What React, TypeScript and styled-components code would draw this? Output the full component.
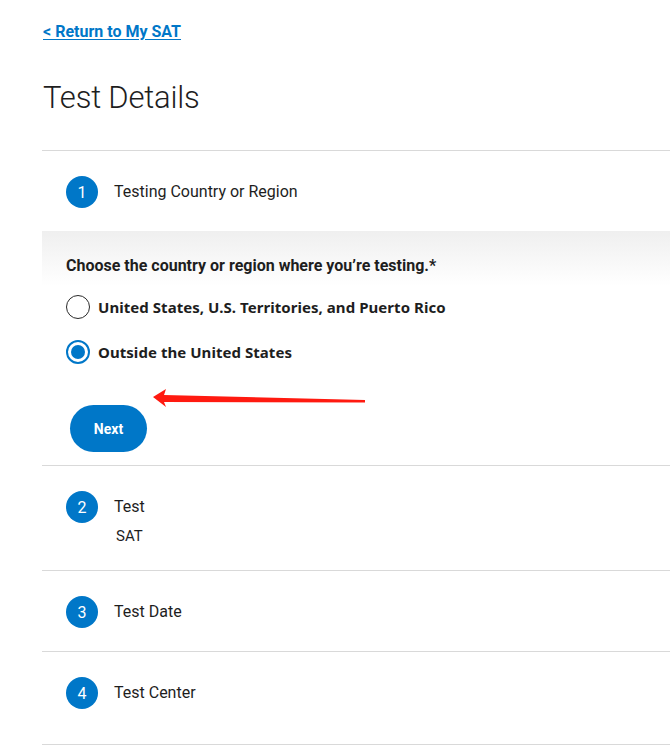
import React from "react";
import styled, { createGlobalStyle } from "styled-components";

const Global = createGlobalStyle`
  html, body { margin: 0; padding: 0; background: #fff; overflow: hidden; }
  body { font-family: Roboto, "Liberation Sans", sans-serif; color: #1e1e1e; }
  * { box-sizing: border-box; }
`;

const Page = styled.div`
  margin-left: 42px;
  padding-top: 22px;
`;

const BackLink = styled.a`
  display: inline-block;
  margin-left: 1px;
  font-size: 16px;
  line-height: 20px;
  font-weight: 700;
  color: #0077c8;
  text-decoration: underline;
  text-underline-offset: 2px;
`;

const Title = styled.h1`
  margin: 38px 0 34px 1px;
  font-size: 31px;
  line-height: 36px;
  font-weight: 300;
  letter-spacing: -0.2px;
  color: #1e1e1e;
`;

const Steps = styled.div`
  border-top: 1px solid #d9d9d9;
`;

const Step = styled.section<{ $last?: boolean }>`
  border-bottom: 1px solid #d9d9d9;
  padding-bottom: ${(p) => (p.$last ? "12px" : "0")};
`;

const StepHeader = styled.div`
  display: flex;
  align-items: flex-start;
  gap: 16px;
  padding: 25px 0 23px 24px;
`;

const Badge = styled.div`
  width: 32px;
  height: 32px;
  border-radius: 50%;
  background: #0077c8;
  color: #fff;
  font-size: 16px;
  display: flex;
  align-items: center;
  justify-content: center;
  flex-shrink: 0;
`;

const StepText = styled.div`
  display: flex;
  flex-direction: column;
  padding-top: 6px;
`;

const StepTitle = styled.div`
  font-size: 16px;
  line-height: 20px;
  color: #1e1e1e;
`;

const StepValue = styled.div`
  margin-top: 9px;
  margin-left: 2px;
  padding-bottom: 1px;
  font-size: 15px;
  line-height: 20px;
  color: #1e1e1e;
`;

const Panel = styled.div`
  position: relative;
  background: linear-gradient(#efefef 0px, #ffffff 55px);
  padding: 23px 0 13px 24px;
`;

const Question = styled.div`
  font-size: 16px;
  line-height: 24px;
  font-weight: 700;
  color: #1e1e1e;
  margin-bottom: 17px;
`;

const Options = styled.div`
  display: flex;
  flex-direction: column;
  gap: 21px;
`;

const Option = styled.label`
  display: flex;
  align-items: center;
  gap: 8px;
  font-family: "Noto Sans", "Open Sans", sans-serif;
  font-weight: 700;
  font-size: 15px;
  letter-spacing: 0.05px;
  color: #1e1e1e;
`;

const Radio = styled.span<{ $checked?: boolean }>`
  width: 24px;
  height: 24px;
  border-radius: 50%;
  border: ${(p) => (p.$checked ? "2.5px solid #0077c8" : "1.5px solid #2a2a2a")};
  background: #fff;
  display: flex;
  align-items: center;
  justify-content: center;
  flex-shrink: 0;
  &::after {
    content: "";
    display: ${(p) => (p.$checked ? "block" : "none")};
    width: 14px;
    height: 14px;
    border-radius: 50%;
    background: #0077c8;
  }
`;

const NextButton = styled.button`
  margin: 41px 0 0 4px;
  width: 77px;
  height: 47px;
  border: none;
  border-radius: 24px;
  background: #0077c8;
  color: #fff;
  font-family: Roboto, "Liberation Sans", sans-serif;
  font-weight: 700;
  font-size: 14px;
  display: block;
`;

const Arrow = styled.svg`
  position: absolute;
  left: 0;
  top: 0;
  width: 400px;
  height: 200px;
  pointer-events: none;
  overflow: visible;
`;

export default function App() {
  return (
    <>
      <Global />
      <Page>
        <BackLink href="#">&lt; Return to My SAT</BackLink>
        <Title>Test Details</Title>
        <Steps>
          <Step>
            <StepHeader>
              <Badge>1</Badge>
              <StepText>
                <StepTitle>Testing Country or Region</StepTitle>
              </StepText>
            </StepHeader>
            <Panel>
              <Question>Choose the country or region where you’re testing.*</Question>
              <Options>
                <Option>
                  <Radio />
                  United States, U.S. Territories, and Puerto Rico
                </Option>
                <Option>
                  <Radio $checked />
                  Outside the United States
                </Option>
              </Options>
              <NextButton>Next</NextButton>
              <Arrow viewBox="0 0 400 200">
                <polygon
                  fill="#ff1a10"
                  points="111,166 124,158 122,164 323,169 323,171.5 122,171 124,176"
                />
              </Arrow>
            </Panel>
          </Step>
          <Step>
            <StepHeader>
              <Badge>2</Badge>
              <StepText>
                <StepTitle>Test</StepTitle>
                <StepValue>SAT</StepValue>
              </StepText>
            </StepHeader>
          </Step>
          <Step>
            <StepHeader>
              <Badge>3</Badge>
              <StepText>
                <StepTitle>Test Date</StepTitle>
              </StepText>
            </StepHeader>
          </Step>
          <Step $last>
            <StepHeader>
              <Badge>4</Badge>
              <StepText>
                <StepTitle>Test Center</StepTitle>
              </StepText>
            </StepHeader>
          </Step>
        </Steps>
      </Page>
    </>
  );
}
